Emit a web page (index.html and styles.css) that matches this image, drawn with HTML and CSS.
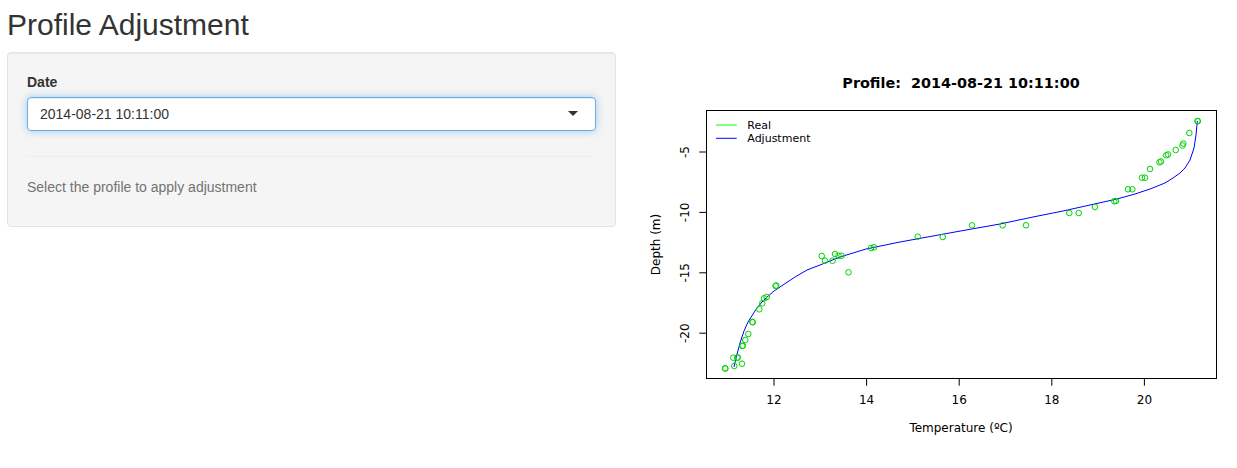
FILE: index.html
```html
<!DOCTYPE html>
<html>
<head>
<meta charset="utf-8">
<title>Profile Adjustment</title>
<link rel="stylesheet" href="styles.css">
</head>
<body>
<div class="container">
  <h2 class="page-title">Profile Adjustment</h2>
  <div class="row">
    <div class="sidebar">
      <div class="well">
        <div class="form-group">
          <label class="control-label">Date</label>
          <div class="selectize-input">
            <span class="item">2014-08-21 10:11:00</span>
          </div>
        </div>
        <hr class="divider">
        <p class="help-block">Select the profile to apply adjustment</p>
      </div>
    </div>
    <div class="main">
      <svg class="plot" width="590" height="400" viewBox="0 0 590 400" xmlns="http://www.w3.org/2000/svg">
        <g transform="translate(-647,-52)" font-family="'DejaVu Sans', sans-serif" fill="#000">
          <text x="961" y="87.5" font-size="14.4" font-weight="bold" text-anchor="middle" xml:space="preserve">Profile:  2014-08-21 10:11:00</text>

          <polyline fill="none" stroke="#0000ff" stroke-width="1" points="734,367 736,358 740,343 744,331 748,322 753,314 757,308 762,302 766,298 774,291 783,285 795,277 807,270 820,265 840,257 866,249 900,242 933,236 966,230 1000,224 1033,217 1063,211 1090,205 1117,199 1135,194 1150,189 1165,183 1173,178 1180,173 1185,168 1190,160 1194,148 1196,135 1197.3,121"/>

          <g fill="none" stroke="#00d400" stroke-width="1">
            <circle cx="1197.5" cy="121" r="2.8"/><circle cx="1197.8" cy="121.3" r="2.8"/>
            <circle cx="1189.3" cy="133" r="2.8"/>
            <circle cx="1183.3" cy="143.5" r="2.8"/>
            <circle cx="1182.5" cy="145.5" r="2.8"/>
            <circle cx="1175.7" cy="150" r="2.8"/>
            <circle cx="1168" cy="154.5" r="2.8"/>
            <circle cx="1166.2" cy="155.3" r="2.8"/>
            <circle cx="1161" cy="161.5" r="2.8"/>
            <circle cx="1159.5" cy="162.3" r="2.8"/>
            <circle cx="1150" cy="169" r="2.8"/>
            <circle cx="1145" cy="177.7" r="2.8"/>
            <circle cx="1142" cy="177.7" r="2.8"/>
            <circle cx="1132.3" cy="189.3" r="2.8"/>
            <circle cx="1128" cy="189.3" r="2.8"/>
            <circle cx="1116" cy="201" r="2.8"/>
            <circle cx="1114.3" cy="201.3" r="2.8"/>
            <circle cx="1095" cy="207" r="2.8"/>
            <circle cx="1078.7" cy="213" r="2.8"/>
            <circle cx="1069.3" cy="213" r="2.8"/>
            <circle cx="1026" cy="225.3" r="2.8"/>
            <circle cx="1002.7" cy="225.3" r="2.8"/>
            <circle cx="972" cy="225.3" r="2.8"/>
            <circle cx="942.7" cy="237" r="2.8"/>
            <circle cx="917.7" cy="236.7" r="2.8"/>
            <circle cx="874" cy="247.3" r="2.8"/>
            <circle cx="871" cy="248" r="2.8"/>
            <circle cx="848.5" cy="272.3" r="2.8"/>
            <circle cx="841.5" cy="255.7" r="2.8"/>
            <circle cx="838.5" cy="255.7" r="2.8"/>
            <circle cx="835" cy="254" r="2.8"/>
            <circle cx="832.5" cy="260.7" r="2.8"/>
            <circle cx="825" cy="260.7" r="2.8"/>
            <circle cx="821.7" cy="256" r="2.8"/>
            <circle cx="775.6" cy="286" r="2.8"/><circle cx="776.2" cy="285.5" r="2.8"/>
            <circle cx="766.7" cy="297" r="2.8"/>
            <circle cx="764" cy="298.3" r="2.8"/>
            <circle cx="762.3" cy="303.3" r="2.8"/>
            <circle cx="759.3" cy="309.3" r="2.8"/>
            <circle cx="752.3" cy="322" r="2.8"/><circle cx="752.8" cy="322.2" r="2.8"/>
            <circle cx="748.3" cy="334" r="2.8"/>
            <circle cx="745.3" cy="340" r="2.8"/>
            <circle cx="742.3" cy="346" r="2.8"/><circle cx="742.8" cy="345.6" r="2.8"/>
            <circle cx="737.3" cy="357.7" r="2.8"/><circle cx="737.8" cy="357.4" r="2.8"/>
            <circle cx="733.3" cy="357.7" r="2.8"/>
            <circle cx="734.3" cy="366" r="2.8"/>
            <circle cx="742" cy="363.7" r="2.8"/>
            <circle cx="725" cy="368.3" r="2.8"/><circle cx="725.4" cy="368.6" r="2.8"/>
          </g>

          <rect x="706.5" y="110.5" width="510" height="268" fill="none" stroke="#000" stroke-width="1"/>

          <g stroke="#000" stroke-width="1">
            <line x1="774" y1="378.5" x2="774" y2="385.7"/>
            <line x1="866.6" y1="378.5" x2="866.6" y2="385.7"/>
            <line x1="959.2" y1="378.5" x2="959.2" y2="385.7"/>
            <line x1="1051.8" y1="378.5" x2="1051.8" y2="385.7"/>
            <line x1="1144.4" y1="378.5" x2="1144.4" y2="385.7"/>
            <line x1="706.5" y1="152" x2="699.3" y2="152"/>
            <line x1="706.5" y1="212.4" x2="699.3" y2="212.4"/>
            <line x1="706.5" y1="272.8" x2="699.3" y2="272.8"/>
            <line x1="706.5" y1="333.2" x2="699.3" y2="333.2"/>
          </g>

          <g font-size="12" text-anchor="middle">
            <text x="774" y="403.8">12</text>
            <text x="866.6" y="403.8">14</text>
            <text x="959.2" y="403.8">16</text>
            <text x="1051.8" y="403.8">18</text>
            <text x="1144.4" y="403.8">20</text>
            <text transform="translate(688.8,152) rotate(-90)">-5</text>
            <text transform="translate(688.8,212.4) rotate(-90)">-10</text>
            <text transform="translate(688.8,272.8) rotate(-90)">-15</text>
            <text transform="translate(688.8,333.2) rotate(-90)">-20</text>
            <text x="961" y="431.5">Temperature (ºC)</text>
            <text transform="translate(660.2,244.5) rotate(-90)">Depth (m)</text>
          </g>

          <line x1="716" y1="125" x2="736.7" y2="125" stroke="#00ff00" stroke-width="1"/>
          <line x1="716" y1="138.3" x2="736.7" y2="138.3" stroke="#0000ff" stroke-width="1"/>
          <g font-size="11">
            <text x="747.3" y="129">Real</text>
            <text x="747.3" y="141.6">Adjustment</text>
          </g>
        </g>
      </svg>
    </div>
  </div>
</div>
</body>
</html>
```

FILE: styles.css
```css
html, body {
  margin: 0;
  padding: 0;
  background: #fff;
  overflow: hidden;
}

body {
  font-family: "Liberation Sans", Arial, Helvetica, sans-serif;
  font-size: 14px;
  line-height: 20px;
  color: #333;
}

.container {
  padding-left: 7px;
}

.page-title {
  margin: 8px 0 11px 0;
  font-size: 30px;
  font-weight: 400;
  line-height: 33px;
  color: #333;
}

.row {
  display: flex;
  align-items: flex-start;
}

.sidebar {
  width: 609px;
  flex: none;
}

.well {
  background: #f5f5f5;
  border: 1px solid #e3e3e3;
  border-radius: 4px;
  box-shadow: inset 0 1px 1px rgba(0, 0, 0, 0.05);
  padding: 19px;
}

.form-group {
  margin-bottom: 15px;
}

.control-label {
  display: block;
  font-weight: bold;
  margin-bottom: 5px;
}

.selectize-input {
  position: relative;
  height: 20px;
  padding: 6px 12px;
  background: #fff;
  border: 1px solid #66afe9;
  border-radius: 4px;
  box-shadow: inset 0 1px 1px rgba(0, 0, 0, 0.075), 0 0 8px rgba(102, 175, 233, 0.6);
  color: #333;
}

.selectize-input::after {
  content: "";
  position: absolute;
  top: 50%;
  right: 17px;
  margin-top: -3px;
  width: 0;
  height: 0;
  border-style: solid;
  border-width: 5px 5px 0 5px;
  border-color: #333 transparent transparent transparent;
}

.divider {
  margin: 25px 0 20px 0;
  border: 0;
  border-top: 1px solid #eee;
  height: 0;
}

.help-block {
  margin: 5px 0 10px 0;
  color: #737373;
}

.main {
  margin-left: 31px;
  flex: none;
}

.plot {
  display: block;
}
```
